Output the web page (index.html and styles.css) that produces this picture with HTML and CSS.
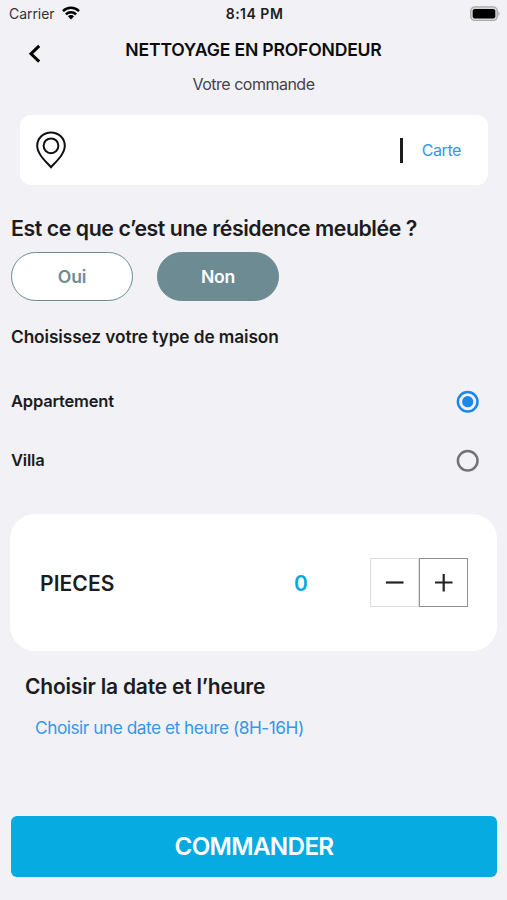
FILE: index.html
```html
<!DOCTYPE html>
<html lang="fr">
<head>
<meta charset="utf-8">
<title>Nettoyage en profondeur</title>
<link rel="stylesheet" href="styles.css">
</head>
<body>
<div class="status-bar">
  <div class="carrier"><span class="carrier-name">Carrier</span>
    <svg class="wifi" width="18" height="14" viewBox="0 0 18 14"><g fill="none" stroke="#000" stroke-width="2.5"><path d="M1 5.1a11.4 11.4 0 0 1 16 0"/><path d="M3.9 8.3a7.2 7.2 0 0 1 10.2 0"/></g><path d="M5.9 10.3a4.4 4.4 0 0 1 6.2 0L9 13.5z"/></svg>
  </div>
  <span class="time">8:14 PM</span>
  <svg class="battery" width="31" height="16" viewBox="0 0 31 16"><rect x=".7" y=".9" width="26.6" height="13.6" rx="4" fill="#d4d4d7" stroke="#a9a9ac" stroke-width="1.2"/><rect x="2.7" y="2.9" width="22.6" height="9.6" rx="2.2"/><path d="M28.4 5.2q2.4 2.5 0 5z" fill="#a9a9ac"/></svg>
</div>
<header class="header">
  <button class="back" aria-label="Retour"><svg width="14" height="20" viewBox="0 0 14 20"><path d="M11.2 1.9 3 9.8l8.2 7.9" fill="none" stroke="#000" stroke-width="3"/></svg></button>
  <h1 class="title">NETTOYAGE EN PROFONDEUR</h1>
</header>
<p class="subtitle">Votre commande</p>
<section class="address">
  <svg class="pin" width="30" height="38" viewBox="0 0 30 38" fill="none" stroke="#111" stroke-width="2"><path d="M15 36.2C9.5 30.2 1.2 22.8 1.2 14.8a13.8 13.4 0 0 1 27.6 0C28.8 22.8 20.5 30.2 15 36.2z"/><circle cx="15" cy="14.8" r="7.4"/></svg>
  <span class="divider"></span>
  <a class="map-link">Carte</a>
</section>
<h2 class="question">Est ce que c’est une résidence meublée ?</h2>
<div class="choices">
  <button class="pill"><span>Oui</span></button>
  <button class="pill selected"><span>Non</span></button>
</div>
<h3 class="type-title">Choisissez votre type de maison</h3>
<div class="option"><span>Appartement</span><svg class="radio checked" width="23" height="23" viewBox="0 0 23 23"><circle class="ring" cx="11.7" cy="11.7" r="9.8"/><circle class="dot" cx="11.7" cy="11.7" r="5.6"/></svg></div>
<div class="option"><span>Villa</span><svg class="radio" width="23" height="23" viewBox="0 0 23 23"><circle class="ring" cx="11.7" cy="11.7" r="9.8"/></svg></div>
<section class="rooms">
  <span class="rooms-label">PIECES</span>
  <span class="count">0</span>
  <div class="stepper">
    <button class="step minus" aria-label="Moins"><svg width="18" height="18" viewBox="0 0 18 18"><path d="M0 8.5h17.5" stroke="#222" stroke-width="2.2"/></svg></button>
    <button class="step plus" aria-label="Plus"><svg width="18" height="18" viewBox="0 0 18 18"><path d="M0 8.5h17.5M8.7 0v17.5" stroke="#222" stroke-width="2.2"/></svg></button>
  </div>
</section>
<h2 class="date-title">Choisir la date et l’heure</h2>
<a class="date-link">Choisir une date et heure (8H-16H)</a>
<button class="order"><span>COMMANDER</span></button>
</body>
</html>
```
FILE: styles.css
```css
* { box-sizing: border-box; }
body {
  margin: 0;
  height: 900px;
  display: flex;
  flex-direction: column;
  overflow: hidden;
  background: #f2f1f6;
  color: #1c1c1e;
  font-family: Inter, "Liberation Sans", sans-serif;
}
h1, h2, h3, p { margin: 0; white-space: nowrap; }
button { margin: 0; padding: 0; border: 0; background: none; font-family: inherit; }
svg { display: block; flex: none; }
.status-bar {
  height: 28px;
  padding: 0 6px 2px 9px;
  display: grid;
  grid-template-columns: 1fr auto 1fr;
  align-items: center;
}
.carrier { display: flex; align-items: center; gap: 7px; font-size: 14px; color: #333; }
.carrier-name { letter-spacing: -.05px; }
.wifi { margin-top: -1px; }
.time { font-size: 14px; font-weight: 600; letter-spacing: .5px; margin-left: -1px; }
.battery { justify-self: end; margin-top: 1px; }
.header {
  height: 44px;
  padding-left: 28px;
  display: grid;
  grid-template-columns: 14px 1fr 42px;
  align-items: start;
}
.back { margin-top: 16px; }
.title { margin-top: 11px; text-align: center; font-size: 17.6px; line-height: 22px; font-weight: 600; color: #0c0c0e; letter-spacing: -.2px; }
.subtitle { height: 43px; text-align: center; font-size: 16px; line-height: 25px; color: #444448; letter-spacing: -.5px; }
.address {
  height: 70px;
  margin: 0 19px 0 20px;
  padding: 0 27px 0 16px;
  display: flex;
  align-items: center;
  background: #fff;
  border-radius: 11px;
}
.divider { width: 3px; height: 25px; margin-left: auto; background: #1d1d1f; }
.map-link { margin-left: 19px; font-size: 16px; color: #3398ea; letter-spacing: -.4px; }
.question { margin: 29px 0 0 11px; font-size: 21.3px; line-height: 28px; font-weight: 600; letter-spacing: -.43px; }
.choices { display: flex; gap: 24px; margin: 10px 0 0 11px; }
.pill { width: 122px; height: 49px; border: 1.4px solid #6d8b92; border-radius: 25px; background: #fff; color: #6d8b92; font-size: 17.6px; font-weight: 600; letter-spacing: -.2px; }
.selected { background: #6d8b92; color: #fff; }
.type-title { margin: 24px 0 28px 11px; font-size: 17.3px; line-height: 24px; font-weight: 600; letter-spacing: -.1px; }
.option { height: 59px; padding: 0 28px 11px 11px; display: flex; align-items: center; justify-content: space-between; font-size: 16.5px; font-weight: 600; letter-spacing: -.2px; }
.ring { fill: none; stroke: #737377; stroke-width: 2.5; }
.checked .ring { stroke: #1d87e5; }
.dot { fill: #1d87e5; }
.rooms {
  height: 137px;
  margin: 19px 10px 0;
  padding: 0 29px 0 30px;
  display: flex;
  align-items: center;
  background: #fff;
  border-radius: 25px;
}
.rooms-label { width: 254px; font-size: 21px; font-weight: 600; letter-spacing: .1px; }
.rooms-label, .count { padding-top: 1px; }
.count { font-size: 21px; font-weight: 600; color: #05a9e1; }
.stepper { display: flex; margin-left: auto; }
.step { width: 49px; height: 49px; display: grid; place-items: center; border: 1px solid #dedede; }
.plus { border-color: #929292; }
.date-title { margin: 21px 0 0 25px; font-size: 21px; line-height: 30px; font-weight: 600; letter-spacing: -.2px; }
.date-link { margin: 14px 0 0 35px; font-size: 17.3px; line-height: 24px; color: #3398ea; letter-spacing: -.48px; }
.order { height: 61px; margin: 76px 10px 0 11px; border-radius: 6px; background: #05abe1; color: #fff; font-size: 24.2px; font-weight: 600; letter-spacing: -.65px; }
```
